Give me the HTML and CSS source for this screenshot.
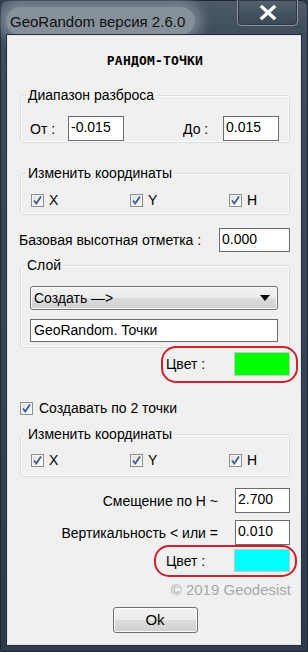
FILE: index.html
```
<!DOCTYPE html>
<html lang="ru">
<head>
<meta charset="utf-8">
<title>GeoRandom</title>
<link rel="stylesheet" href="styles.css">
</head>
<body>
<div class="window">
  <div class="titlebar">
    <span class="title">GeoRandom версия 2.6.0</span>
    <div class="close">
      <svg width="18" height="15" viewBox="0 0 18 15"><path d="M3 2 L15 13 M15 2 L3 13" stroke="#5a6470" stroke-width="4.4" stroke-linecap="square" fill="none"/><path d="M3 2 L15 13 M15 2 L3 13" stroke="#ffffff" stroke-width="3.2" stroke-linecap="square" fill="none"/></svg>
    </div>
  </div>
  <div class="client">
    <div class="heading">РАНДОМ-ТОЧКИ</div>

    <fieldset class="group g-range">
      <legend>Диапазон разброса</legend>
      <div class="range-row">
        <span class="lbl-from">От :</span>
        <div class="edit edit-range">-0.015</div>
        <span class="lbl-to">До :</span>
        <div class="edit edit-range">0.015</div>
      </div>
    </fieldset>

    <fieldset class="group g-coords">
      <legend>Изменить координаты</legend>
      <div class="check-row">
        <label class="check"><span class="box"><svg width="11" height="11" viewBox="0 0 11 11"><path d="M2 5.5 L4.3 8.5 L9 1.5" stroke="#3d5a98" stroke-width="1.8" fill="none"/></svg></span>X</label>
        <label class="check"><span class="box"><svg width="11" height="11" viewBox="0 0 11 11"><path d="M2 5.5 L4.3 8.5 L9 1.5" stroke="#3d5a98" stroke-width="1.8" fill="none"/></svg></span>Y</label>
        <label class="check"><span class="box"><svg width="11" height="11" viewBox="0 0 11 11"><path d="M2 5.5 L4.3 8.5 L9 1.5" stroke="#3d5a98" stroke-width="1.8" fill="none"/></svg></span>H</label>
      </div>
    </fieldset>

    <div class="base-row">
      <span class="base-label">Базовая высотная отметка :</span>
      <div class="edit edit-base">0.000</div>
    </div>

    <fieldset class="group g-layer">
      <legend>Слой</legend>
      <div class="combo"><span>Создать —&gt;</span><span class="arrow"></span></div>
      <div class="edit edit-layer">GeoRandom. Точки</div>
    </fieldset>

    <div class="color-row color-1">
      <span class="color-label">Цвет :</span>
      <div class="swatch swatch-green"></div>
      <div class="mark mark-1"></div>
    </div>

    <label class="check check-two"><span class="box"><svg width="11" height="11" viewBox="0 0 11 11"><path d="M2 5.5 L4.3 8.5 L9 1.5" stroke="#3d5a98" stroke-width="1.8" fill="none"/></svg></span>Создавать по 2 точки</label>

    <fieldset class="group g-coords2">
      <legend>Изменить координаты</legend>
      <div class="check-row">
        <label class="check"><span class="box"><svg width="11" height="11" viewBox="0 0 11 11"><path d="M2 5.5 L4.3 8.5 L9 1.5" stroke="#3d5a98" stroke-width="1.8" fill="none"/></svg></span>X</label>
        <label class="check"><span class="box"><svg width="11" height="11" viewBox="0 0 11 11"><path d="M2 5.5 L4.3 8.5 L9 1.5" stroke="#3d5a98" stroke-width="1.8" fill="none"/></svg></span>Y</label>
        <label class="check"><span class="box"><svg width="11" height="11" viewBox="0 0 11 11"><path d="M2 5.5 L4.3 8.5 L9 1.5" stroke="#3d5a98" stroke-width="1.8" fill="none"/></svg></span>H</label>
      </div>
    </fieldset>

    <div class="param-row row-shift">
      <span class="param-label">Смещение по Н ~</span>
      <div class="edit edit-param">2.700</div>
    </div>
    <div class="param-row row-vert">
      <span class="param-label">Вертикальность &lt; или =</span>
      <div class="edit edit-param">0.010</div>
    </div>

    <div class="color-row color-2">
      <span class="color-label">Цвет :</span>
      <div class="swatch swatch-cyan"></div>
      <div class="mark mark-2"></div>
    </div>

    <div class="copyright">© 2019 Geodesist</div>

    <div class="ok-btn">Ok</div>
  </div>
</div>
</body>
</html>
```

FILE: styles.css
```
* { box-sizing: border-box; }
html, body { margin: 0; padding: 0; background: #2c3846; }
body { width: 308px; height: 652px; overflow: hidden; }

.window {
  width: 308px;
  height: 652px;
  padding: 0 8px 8px 8px;
  display: flex;
  flex-direction: column;
  border-radius: 7px 7px 4px 4px;
  background: linear-gradient(180deg, #4d5a69 0px, #3f4c5b 36px, #2f3b4a 100%);
  box-shadow: inset 0 0 0 1px #1e2833;
}

.titlebar {
  height: 36px;
  display: flex;
  justify-content: space-between;
  align-items: flex-start;
}
.title {
  display: block;
  font-family: "Liberation Sans", Arial, sans-serif;
  font-size: 15px;
  line-height: 17px;
  color: #111111;
  margin: 7px 0 0 -2px;
  padding: 6px 10px 5px 4px;
  border-radius: 16px;
  background-color: rgba(150,160,170,0.8);
  box-shadow: 0 0 12px 7px rgba(135,146,157,0.75);
}
.close {
  width: 61px;
  height: 26px;
  margin-right: 2px;
  border: 1px solid #8994a1;
  border-top: none;
  border-radius: 0 0 5px 5px;
  background: linear-gradient(180deg, #56636f 0%, #45525f 50%, #3c4855 100%);
  box-shadow: inset 0 0 0 1px #2e3945;
  display: flex;
  align-items: center;
  justify-content: center;
}

.client {
  flex: 1;
  background: #f0f0f0;
  box-shadow: 0 0 0 1px #dde4ea, 0 0 0 2px #26313d;
  padding: 17px 10px 0 12px;
  font-family: "Liberation Sans", Arial, sans-serif;
  font-size: 14px;
  color: #000;
  display: flex;
  flex-direction: column;
  position: relative;
}

.heading {
  height: 16px;
  line-height: 16px;
  text-align: center;
  font-family: "DejaVu Sans Mono", monospace;
  font-weight: bold;
  font-size: 13px;
  letter-spacing: 0.2px;
}

.group {
  margin: 0;
  border: 1px solid #d5dfe5;
  border-radius: 3px;
  box-shadow: 0 0 0 1px #fafbfc inset;
  min-width: 0;
  padding: 0 10px;
}
.group legend {
  padding: 0 2px;
  margin-left: -5px;
  line-height: 16px;
  font-size: 14px;
}

.edit {
  background: #fff;
  border: 1px solid #6d6d6d;
  padding: 0 0 0 2px;
  font-size: 14px;
  line-height: 20px;
  white-space: nowrap;
}

.g-range { margin-top: 18px; padding-top: 13px; padding-bottom: 1px; }
.range-row { display: flex; align-items: center; height: 25px; }
.lbl-from { width: 38px; margin-left: -1px; }
.lbl-to { width: 40px; margin-left: 59px; }
.edit-range { width: 56px; height: 25px; }

.g-coords { margin-top: 22px; padding-top: 11px; padding-bottom: 6px; }
.g-coords2 { margin-top: 10px; padding-top: 10px; padding-bottom: 8px; }
.check-row { display: flex; height: 16px; align-items: center; }
.check-row .check { flex: none; width: 99px; }
.check-row .check:last-child { width: auto; }
.check { display: flex; align-items: center; gap: 5px; height: 16px; line-height: 16px; }
.box {
  width: 13px;
  height: 13px;
  border: 1px solid #8e8f8f;
  background: linear-gradient(135deg, #dcdcdc 0%, #f6f6f6 70%, #fff 100%);
  box-shadow: inset 0 0 0 1px #f4f4f4;
  display: flex;
  align-items: center;
  justify-content: center;
  flex: none;
}

.base-row { margin-top: 13px; height: 24px; display: flex; align-items: center; justify-content: space-between; }
.base-label { margin-left: -1px; }
.edit-base { width: 71px; height: 24px; }

.g-layer { margin-top: 5px; padding: 13px 11px 5px 9px; }
.combo {
  height: 24px;
  width: 248px;
  border: 1px solid #707070;
  border-radius: 3px;
  background: linear-gradient(180deg, #f2f2f2 0%, #ebebeb 50%, #dddddd 51%, #cfcfcf 100%);
  box-shadow: inset 0 0 0 1px #fcfcfc;
  display: flex;
  align-items: center;
  justify-content: space-between;
  padding: 0 7px 0 3px;
}
.arrow {
  width: 0;
  height: 0;
  border-left: 5px solid transparent;
  border-right: 5px solid transparent;
  border-top: 6px solid #000;
}
.edit-layer { margin-top: 9px; width: 248px; height: 23px; line-height: 21px; padding-left: 3px; }

.color-row { position: relative; display: flex; align-items: center; margin-top: 4px; }
.color-1 { height: 24px; }
.color-2 { height: 23px; }
.color-label { margin-left: 146px; }
.swatch { margin-left: auto; width: 56px; height: 100%; border: 1px solid #c8c8c8; }
.swatch-green { background: #00ff00; }
.swatch-cyan { background: #00ffff; }
.mark {
  position: absolute;
  border: 2px solid #d11f2c;
  border-radius: 15px;
}
.mark-1 { left: 141px; top: -6px; width: 137px; height: 37px; }
.mark-2 { left: 134px; top: -4px; width: 143px; height: 32px; }

.check-two { margin-top: 24px; gap: 6px; }

.param-row { display: flex; align-items: center; justify-content: flex-end; height: 25px; }
.row-shift { margin-top: 11px; }
.row-vert { margin-top: 7px; }
.param-label { margin-right: 17px; }
.edit-param { width: 55px; height: 25px; }

.copyright {
  margin-top: 9px;
  height: 18px;
  line-height: 18px;
  text-align: right;
  color: #a9a9a9;
  font-size: 15px;
  margin-right: -1px;
}

.ok-btn {
  margin: 8px auto 0;
  width: 85px;
  height: 26px;
  border: 1px solid #707070;
  border-radius: 3px;
  background: linear-gradient(180deg, #f2f2f2 0%, #ebebeb 50%, #dddddd 51%, #cfcfcf 100%);
  box-shadow: inset 0 0 0 1px #fcfcfc;
  text-align: center;
  line-height: 24px;
  font-size: 15px;
}
```
